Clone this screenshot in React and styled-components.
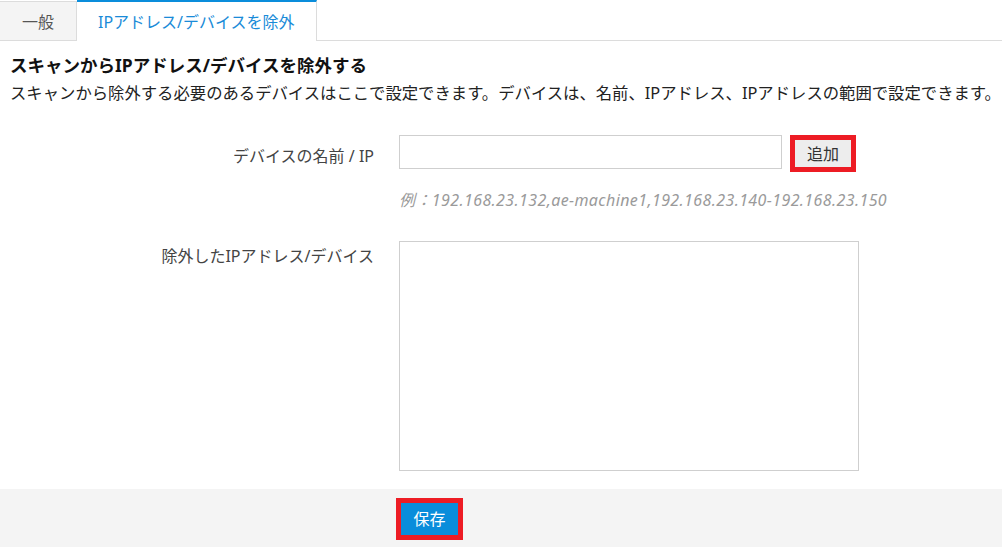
import React, { useState } from "react";
import styled, { createGlobalStyle } from "styled-components";

const GlobalStyle = createGlobalStyle`
  html, body {
    margin: 0;
    padding: 0;
    background: #fff;
  }
  body {
    font-family: "Noto Sans", "Noto Sans CJK JP", sans-serif;
    color: #333;
  }
  * {
    box-sizing: border-box;
  }
`;

const Page = styled.div`
  display: flex;
  flex-direction: column;
  height: 547px;
  overflow: hidden;
`;

const TabBar = styled.div`
  display: flex;
  align-items: flex-end;
  height: 41px;
  border-bottom: 1px solid #dcdcdc;
`;

const Tab = styled.div`
  height: ${(p) => (p.$active ? "41px" : "39px")};
  padding: 0 ${(p) => p.$pad}px;
  margin-bottom: ${(p) => (p.$active ? "-1px" : "0")};
  display: flex;
  align-items: center;
  font-size: 16px;
  color: ${(p) => (p.$active ? "#1a8bd8" : "#555")};
  background: ${(p) => (p.$active ? "#fff" : "#f4f4f4")};
  border-top: ${(p) => (p.$active ? "2px solid #0a8ddb" : "1px solid #dcdcdc")};
  border-right: 1px solid #dcdcdc;
  padding-bottom: ${(p) => (p.$active ? "2px" : "0")};
  cursor: pointer;
`;

const Intro = styled.div`
  padding: 12px 10px 0;
`;

const Heading = styled.h2`
  margin: 0;
  font-size: 17.5px;
  line-height: 24px;
  font-weight: 700;
  color: #111;
`;

const Description = styled.p`
  margin: 4px 0 0;
  font-size: 16.35px;
  line-height: 24px;
  color: #222;
  white-space: nowrap;
`;

const Form = styled.div`
  display: grid;
  grid-template-columns: 374px 1fr;
  column-gap: 25px;
  row-gap: 31px;
  margin-top: 30px;
`;

const Label = styled.label`
  text-align: right;
  font-size: 16px;
  line-height: 24px;
  padding-top: ${(p) => p.$offset}px;
  color: #444;
`;

const Field = styled.div`
  display: flex;
  flex-direction: column;
`;

const InputRow = styled.div`
  display: flex;
  align-items: flex-start;
  gap: 8px;
`;

const TextInput = styled.input`
  width: 383px;
  height: 34px;
  border: 1px solid #cfcfcf;
  padding: 0 8px;
  font-size: 15px;
  outline: none;
`;

const Button = styled.button`
  font-family: inherit;
  font-size: 16px;
  line-height: 1;
  padding: 0;
  width: ${(p) => p.$w}px;
  height: ${(p) => p.$h}px;
  border: 5px solid ${(p) => (p.$marked ? "#ed1c24" : "#ccc")};
  background: ${(p) => (p.$primary ? "#0a8ddb" : "#ededed")};
  color: ${(p) => (p.$primary ? "#fff" : "#333")};
  cursor: pointer;
`;

const Hint = styled.div`
  margin-top: 18px;
  font-size: 16px;
  line-height: 20px;
  letter-spacing: 0.4px;
  color: #9a9a9a;
  font-style: italic;
  font-weight: 400;
`;

const ExcludedList = styled.textarea`
  width: 460px;
  height: 230px;
  border: 1px solid #cfcfcf;
  resize: none;
  outline: none;
  font-family: inherit;
  font-size: 15px;
`;

const Footer = styled.div`
  flex: 1;
  margin-top: 18px;
  background: #f4f4f4;
  padding: 9px 0 0 396px;
`;

export default function App() {
  const [tab, setTab] = useState(1);

  return (
    <Page>
      <GlobalStyle />
      <TabBar>
        <Tab $pad={22} $active={tab === 0} onClick={() => setTab(0)}>
          一般
        </Tab>
        <Tab $pad={21} $active={tab === 1} onClick={() => setTab(1)}>
          IPアドレス/デバイスを除外
        </Tab>
      </TabBar>

      <Intro>
        <Heading>スキャンからIPアドレス/デバイスを除外する</Heading>
        <Description>
          スキャンから除外する必要のあるデバイスはここで設定できます。デバイスは、名前、IPアドレス、IPアドレスの範囲で設定できます。
        </Description>
      </Intro>

      <Form>
        <Label $offset={9}>デバイスの名前 / IP</Label>
        <Field>
          <InputRow>
            <TextInput type="text" />
            <Button $marked $w={66} $h={37}>
              追加
            </Button>
          </InputRow>
          <Hint>例：192.168.23.132,ae-machine1,192.168.23.140-192.168.23.150</Hint>
        </Field>

        <Label $offset={3}>除外したIPアドレス/デバイス</Label>
        <Field>
          <ExcludedList />
        </Field>
      </Form>

      <Footer>
        <Button $marked $primary $w={67} $h={42}>
          保存
        </Button>
      </Footer>
    </Page>
  );
}
